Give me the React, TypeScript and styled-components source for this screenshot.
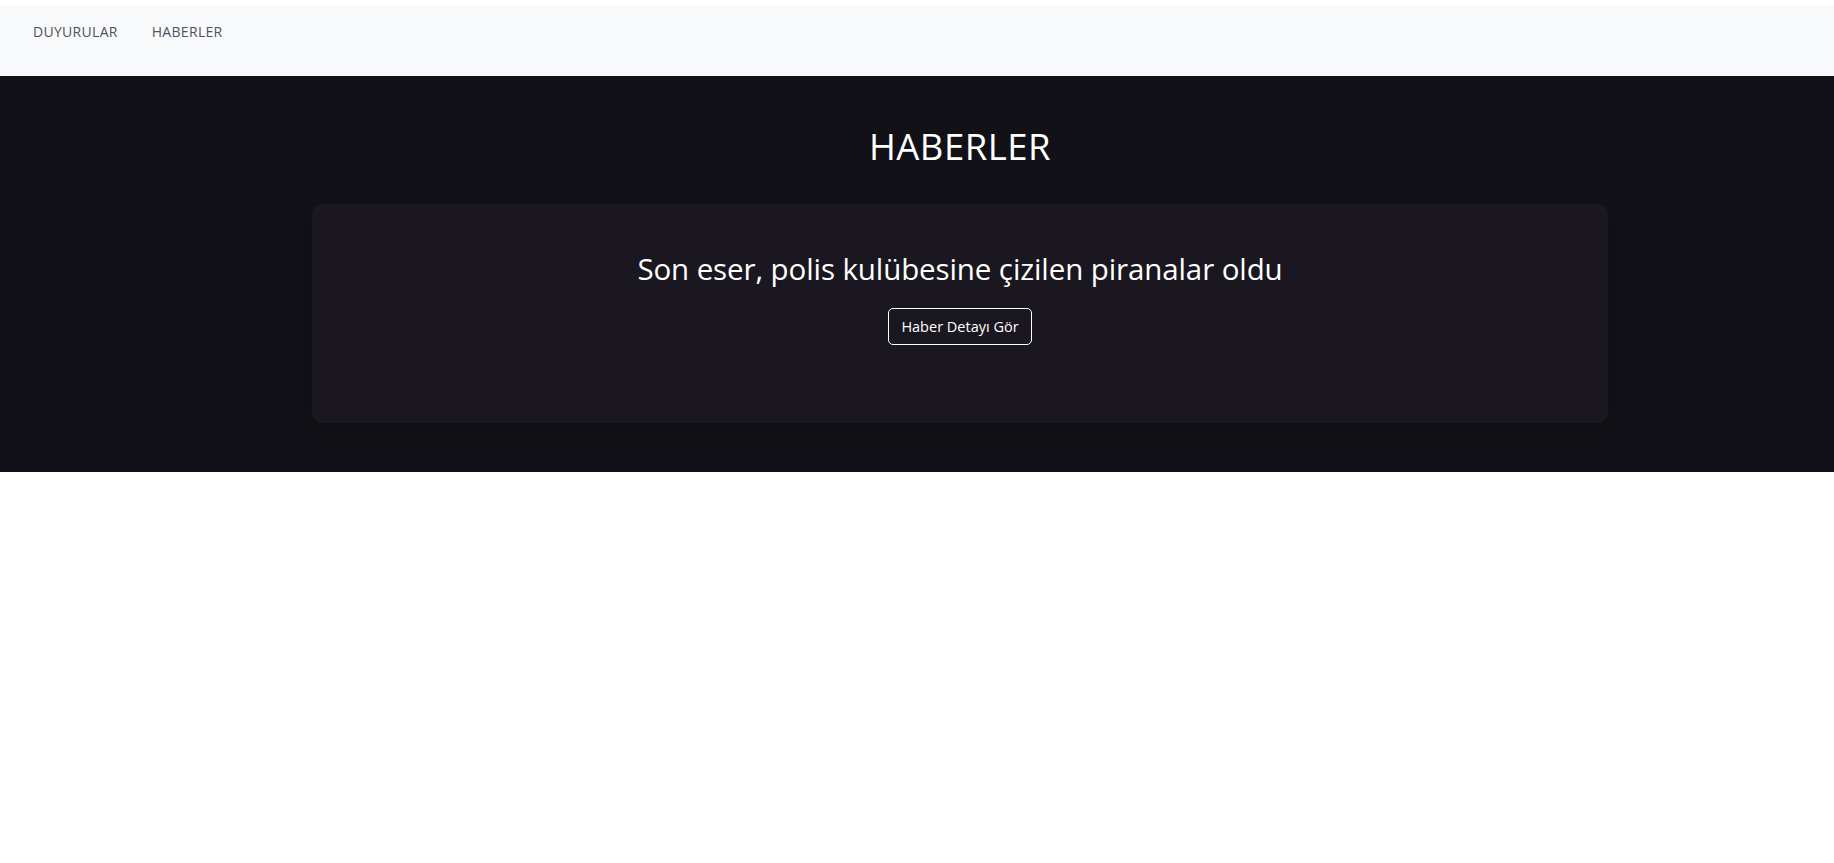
import React from "react";
import styled, { createGlobalStyle } from "styled-components";

const GlobalStyle = createGlobalStyle`
  body {
    margin: 0;
    background: #ffffff;
    font-family: "Open Sans", "Noto Sans", sans-serif;
    overflow-x: hidden;
  }
`;

const Page = styled.div`
  width: 100%;
  overflow: hidden;
  padding-top: 5px;
`;

const NavBar = styled.nav`
  height: 71px;
  background-color: #f8f9fa;
  display: flex;
  align-items: flex-start;
  padding: 16px 0 0 33px;
  box-sizing: border-box;
  gap: 34px;
`;

const NavLink = styled.a`
  font-size: 14px;
  letter-spacing: 0.3px;
  color: #4f535c;
  text-decoration: none;
  line-height: 22px;
`;

const DarkSection = styled.section`
  background-color: #121117;
  padding: 46px 0 49px;
`;

// the original lays out on a 1920px wide canvas, so the content centre sits at 960
const Wide = styled.div`
  width: 1920px;
  display: flex;
  flex-direction: column;
  align-items: center;
`;

const Heading = styled.h1`
  margin: 0 0 33px;
  font-size: 36.5px;
  font-weight: 400;
  color: #ffffff;
  line-height: 49px;
  letter-spacing: 0.5px;
`;

const Card = styled.div`
  width: 1296px;
  height: 219px;
  box-sizing: border-box;
  background-color: #1a1720;
  border-radius: 10px;
  box-shadow: 0 4px 14px rgba(0, 0, 0, 0.25);
  display: flex;
  flex-direction: column;
  align-items: center;
  padding-top: 46px;
`;

const CardTitle = styled.h2`
  margin: 0 0 20px;
  font-size: 29.5px;
  font-weight: 400;
  color: #ffffff;
  line-height: 38px;
  letter-spacing: -0.1px;
`;

const OutlineButton = styled.button`
  height: 37px;
  width: 144px;
  background: transparent;
  border: 1px solid #ffffff;
  border-radius: 5px;
  color: #ffffff;
  font-family: "Open Sans", "Noto Sans", sans-serif;
  font-size: 14.5px;
  white-space: nowrap;
  padding: 0;
  cursor: pointer;
`;

function App() {
  return (
    <Page>
      <GlobalStyle />
      <NavBar>
        <NavLink href="#">DUYURULAR</NavLink>
        <NavLink href="#">HABERLER</NavLink>
      </NavBar>
      <DarkSection>
        <Wide>
          <Heading>HABERLER</Heading>
          <Card>
            <CardTitle>Son eser, polis kulübesine çizilen piranalar oldu</CardTitle>
            <OutlineButton>Haber Detayı Gör</OutlineButton>
          </Card>
        </Wide>
      </DarkSection>
    </Page>
  );
}

export default App;
